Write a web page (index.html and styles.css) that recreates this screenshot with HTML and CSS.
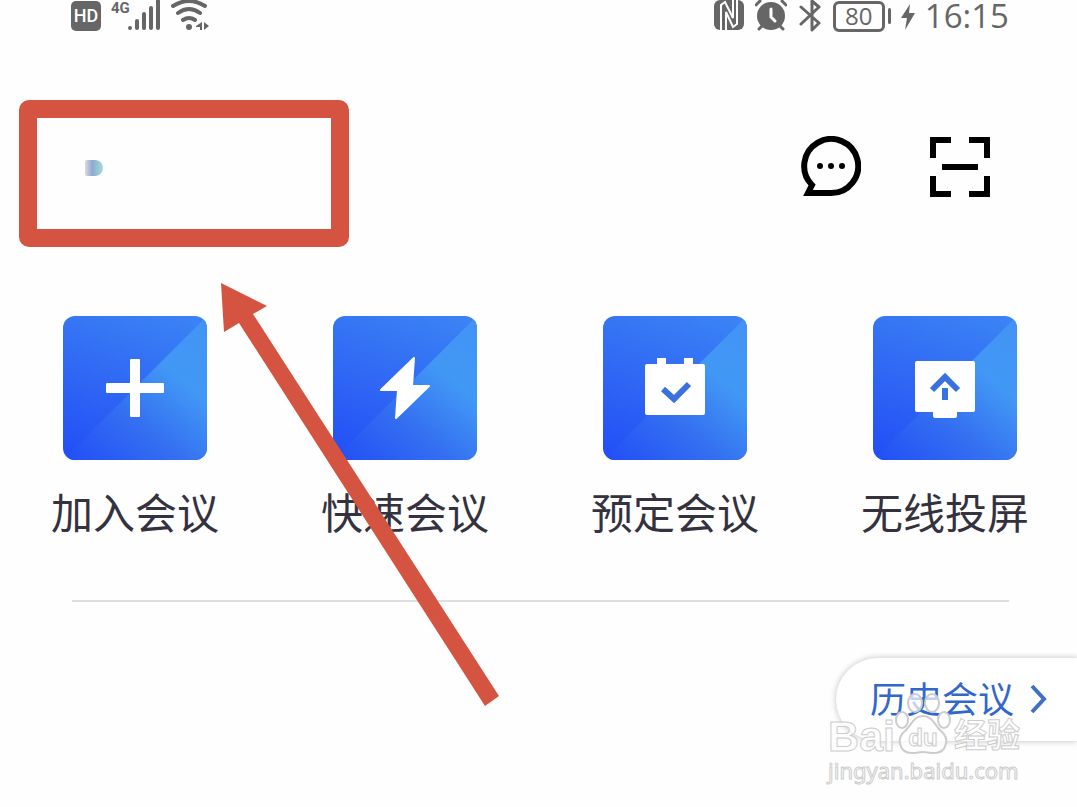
FILE: index.html
```html
<!DOCTYPE html>
<html lang="zh-CN">
  <head>
    <meta charset="UTF-8" />
    <meta name="viewport" content="width=device-width, initial-scale=1" />
    <title>会议</title>
    <link rel="stylesheet" href="styles.css">
  </head>
  <body>
    <!-- Status bar -->
    <div class="status-bar">
      <div class="status-group">
        <span class="hd">HD</span>
        <div class="network">
          <span class="network-type">4G</span>
          <svg width="34" height="32" viewBox="0 0 34 32" fill="none" stroke="#666" stroke-width="4" stroke-linecap="round">
            <path d="M3 28v0M10 28v-7M17 28V14M24 28V8M31 28V1" />
          </svg>
        </div>
        <svg width="38" height="32" viewBox="0 0 38 32" fill="none" stroke="#666" stroke-width="4" stroke-linecap="round">
          <path d="M2 6q16-10 32 0M7 13q11-8 22 0M12 20q6-4 12 0" />
          <circle cx="18" cy="27" r="3" fill="#666" stroke="none" />
          <path d="M31 22v8h-2v-3h-4v-1zM33 22v8l5-4z" fill="#666" stroke="none" />
        </svg>
      </div>
      <div class="status-group">
        <svg width="32" height="32" viewBox="0 0 32 32">
          <rect x="1" y="0" width="30" height="30" rx="6" fill="#666" />
          <path d="M8 30V5l4-3 8 16V0M13 30V12l7 15 4-3V0" fill="none" stroke="#fff" stroke-width="2" />
        </svg>
        <svg width="32" height="32" viewBox="0 0 32 32" fill="none" stroke="#666" stroke-width="3" stroke-linecap="round">
          <circle cx="16" cy="16" r="14" fill="#666" stroke="none" />
          <path d="M1 5l4-4M31 5l-4-4M7 26l-3 3M25 26l3 3" />
          <path d="M16 9v8l4 4" stroke="#fff" />
        </svg>
        <svg width="26" height="32" viewBox="0 0 26 32" fill="none" stroke="#666" stroke-width="3" stroke-linecap="round" stroke-linejoin="round">
          <path d="M4 7l18 16-7 7V1l7 6L4 24" />
        </svg>
        <div class="battery">
          <span class="battery-level">80</span>
          <span class="battery-tip"></span>
        </div>
        <svg width="14" height="32" viewBox="0 0 14 32" fill="#666">
          <path d="M9 4L0 18h6L4 30l10-17H8z" />
        </svg>
        <span class="clock">16:15</span>
      </div>
    </div>

    <!-- Header -->
    <header class="header">
      <button class="profile" aria-label="个人资料">
        <span class="avatar"></span>
      </button>
      <div class="header-actions">
        <button class="icon-button" aria-label="消息">
          <svg width="61" height="61" viewBox="0 0 61 61">
            <path d="M12 49A27 27 0 1 1 31 57H8z" fill="none" stroke="#000" stroke-width="6" />
            <circle cx="20" cy="30" r="3" />
            <circle cx="31" cy="30" r="3" />
            <circle cx="42" cy="30" r="3" />
          </svg>
        </button>
        <button class="icon-button" aria-label="扫一扫">
          <svg width="60" height="60" viewBox="0 0 60 60" fill="none" stroke="#000" stroke-width="6">
            <path d="M3 21V3h18M39 3h18v18M57 39v18H39M21 57H3V39M12 30h36" />
          </svg>
        </button>
      </div>
    </header>

    <!-- Actions -->
    <main>
      <nav class="actions">
        <a class="action" href="#">
          <span class="tile">
            <svg width="144" height="144" viewBox="0 0 144 144" fill="#fff">
              <rect x="43" y="67" width="58" height="10" rx="1" />
              <rect x="67" y="43" width="10" height="58" rx="1" />
            </svg>
          </span>
          <span class="action-label">加入会议</span>
        </a>
        <a class="action" href="#">
          <span class="tile">
            <svg width="144" height="144" viewBox="0 0 144 144" fill="#fff" stroke="#fff" stroke-width="2" stroke-linejoin="round">
              <path d="M81 42L48 74h17l-2 28 33-32H79z" />
            </svg>
          </span>
          <span class="action-label">快速会议</span>
        </a>
        <a class="action" href="#">
          <span class="tile">
            <svg width="144" height="144" viewBox="0 0 144 144" fill="#fff">
              <rect x="42" y="48" width="60" height="51" rx="2" />
              <path d="M54 42h9v7h-9zM81 42h9v7h-9z" />
              <path d="M60 73l11 10 15-15" fill="none" stroke="#3a70e0" stroke-width="6" />
            </svg>
          </span>
          <span class="action-label">预定会议</span>
        </a>
        <a class="action" href="#">
          <span class="tile">
            <svg width="144" height="144" viewBox="0 0 144 144" fill="#fff">
              <rect x="42" y="45" width="60" height="51" rx="2" />
              <rect x="60" y="92" width="24" height="10" rx="2" />
              <path d="M59 74l13-13 13 13" fill="none" stroke="#3a70e0" stroke-width="6" />
              <path d="M69 72h6v12h-6z" fill="#3a70e0" />
            </svg>
          </span>
          <span class="action-label">无线投屏</span>
        </a>
      </nav>

      <hr class="divider">

      <a class="history" href="#">
        <span class="history-label">历史会议</span>
        <svg width="18" height="32" viewBox="0 0 18 32" fill="none" stroke="#3f70c4" stroke-width="4">
          <path d="M2 2l12 13L2 28" />
        </svg>
      </a>
    </main>

    <!-- Arrow pointing at the profile -->
    <svg class="arrow" width="280" height="425" viewBox="0 0 280 425">
      <path d="M1 1l46 23-14 8 246 382-14 10L19 41 4 50z" fill="#d55341" />
    </svg>

    <!-- Watermark -->
    <div class="watermark">
      <div class="watermark-brand">
        <span>Bai</span>
        <span class="paw">
          <svg width="56" height="62" viewBox="0 0 56 62" fill="#fff" fill-opacity="0.7" stroke="#ccc" stroke-width="2">
            <ellipse cx="7" cy="28" rx="6" ry="8" />
            <ellipse cx="20" cy="11" rx="7" ry="9" />
            <ellipse cx="37" cy="11" rx="7" ry="9" />
            <ellipse cx="49" cy="28" rx="6" ry="8" />
            <path d="M28 24c-10 0-11 9-18 15-9 7-6 22 7 22 5 0 7-1 11-1s6 1 11 1c13 0 16-15 7-22-7-6-8-15-18-15z" />
          </svg>
          <span class="paw-text">du</span>
        </span>
        <span class="watermark-cn">经验</span>
      </div>
      <div class="watermark-url">jingyan.baidu.com</div>
    </div>
  </body>
</html>
```

FILE: styles.css
```css
* {
  box-sizing: border-box;
}
body {
  position: relative;
  margin: 0;
  min-height: 100vh;
  overflow-x: hidden;
  background: #fefefe;
  font-family: "Noto Sans CJK SC", sans-serif;
  color: #35323f;
}
a {
  color: inherit;
  text-decoration: none;
}
button {
  padding: 0;
  border: none;
  background: none;
  cursor: pointer;
}
svg {
  display: block;
}

/* status bar */
.status-bar {
  display: flex;
  justify-content: space-between;
  height: 32px;
  padding: 0 68px 0 71px;
  color: #666;
}
.status-group {
  display: flex;
  align-items: center;
  gap: 10px;
}
.hd {
  width: 30px;
  height: 30px;
  border-radius: 5px;
  background: #666;
  color: #fff;
  font: 500 18px/30px Roboto, sans-serif;
  text-align: center;
}
.network {
  display: flex;
  align-items: flex-start;
}
.network-type {
  width: 16px;
  font: bold 15px/16px Roboto, sans-serif;
}
.battery {
  display: flex;
  align-items: center;
  gap: 3px;
  width: 58px;
}
.battery-level {
  width: 52px;
  height: 31px;
  border: 3px solid #666;
  border-radius: 6px;
  font: 24px/24px "Open Sans", sans-serif;
  text-align: center;
}
.battery-tip {
  width: 3px;
  height: 16px;
  border-radius: 2px;
  background: #666;
}
.clock {
  font: 33px/32px "Open Sans", sans-serif;
}

/* header */
.header {
  display: flex;
  justify-content: space-between;
  align-items: flex-start;
  margin-top: 68px;
  padding: 0 87px 0 19px;
}
.profile {
  width: 330px;
  height: 147px;
  padding: 0 48px;
  border: 18px solid #d55341;
  border-radius: 10px;
}
.avatar {
  display: block;
  width: 18px;
  height: 16px;
  margin-bottom: 12px;
  border-radius: 2px 8px 8px 2px;
  background: linear-gradient(90deg, #e0d8e4, #8fa9d0 40%, #a3dcdc);
}
.header-actions {
  display: flex;
  gap: 69px;
  padding-top: 36px;
}

/* action tiles */
.actions {
  display: flex;
  justify-content: space-between;
  margin-top: 69px;
  padding: 0 48px 0 51px;
}
.action {
  display: flex;
  flex-direction: column;
  align-items: center;
  gap: 21px;
}
.tile {
  position: relative;
  width: 144px;
  height: 144px;
  border-radius: 12px;
  overflow: hidden;
  background: linear-gradient(20deg, #224df6, #2f66f4 45%, #3c85f5);
}
.tile::before {
  content: "";
  position: absolute;
  inset: 0;
  clip-path: polygon(100% 0, 100% 100%, 0 100%);
  background: linear-gradient(40deg, #224df6, #3470f1 38%, #4298f5 68%, #4292f5);
}
.tile svg {
  position: relative;
}
.action-label {
  font-size: 42px;
  line-height: 60px;
}
.divider {
  height: 2px;
  margin: 59px 68px 0 72px;
  border: none;
  background: #dfdfdf;
}
.history {
  display: flex;
  align-items: center;
  gap: 16px;
  width: fit-content;
  height: 83px;
  margin: 56px 0 0 auto;
  padding: 0 29px 0 34px;
  border-radius: 42px 0 0 42px;
  background: #fff;
  box-shadow: 0 0 6px rgba(0, 0, 0, 0.25);
  color: #3268cb;
  font-size: 36px;
}
.history-label {
  padding-bottom: 6px;
}

/* overlays */
.arrow {
  position: absolute;
  top: 282px;
  left: 220px;
  pointer-events: none;
}
.watermark {
  position: absolute;
  top: 692px;
  right: 57px;
  color: rgba(255, 255, 255, 0.8);
  font-family: "Liberation Sans", "Noto Sans CJK SC", sans-serif;
  -webkit-text-stroke: 1px #ccc;
  pointer-events: none;
}
.watermark-brand {
  display: flex;
  align-items: flex-end;
  font-size: 43px;
  font-weight: bold;
  line-height: 36px;
}
.paw {
  position: relative;
}
.paw-text {
  position: absolute;
  top: 30px;
  left: 0;
  width: 100%;
  font-size: 24px;
  line-height: 32px;
  text-align: center;
}
.watermark-cn {
  margin-left: 3px;
  font-size: 33px;
}
.watermark-url {
  font-family: "Noto Sans", sans-serif;
  font-size: 22px;
  line-height: 32px;
}
```
